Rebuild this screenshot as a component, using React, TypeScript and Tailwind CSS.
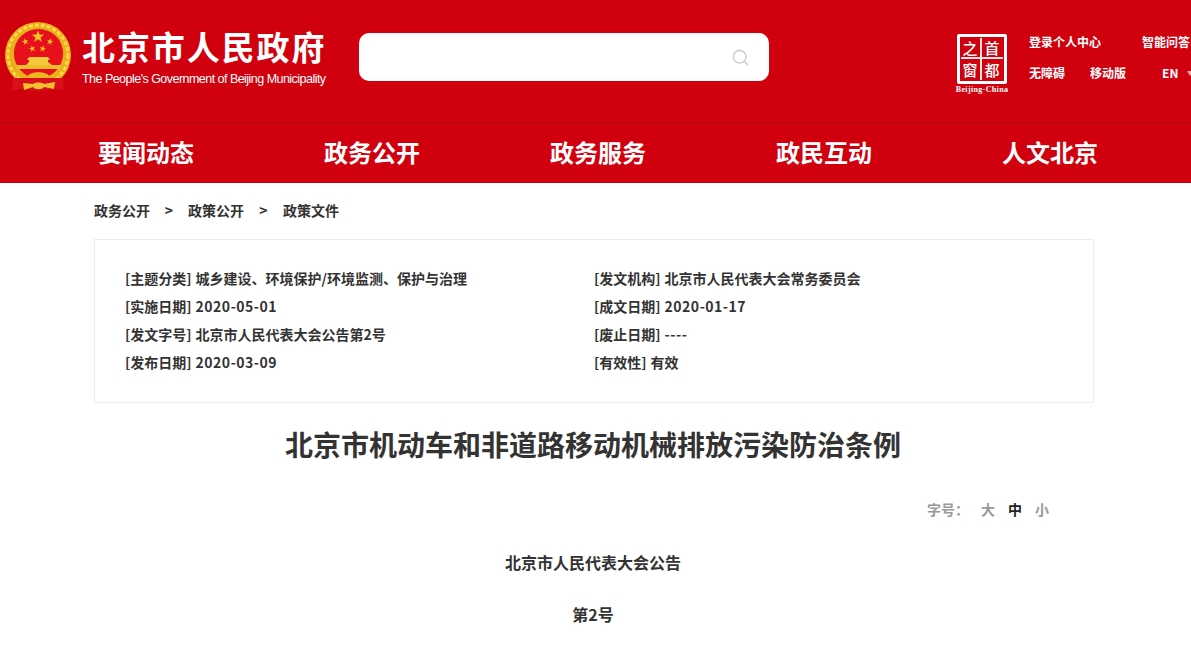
import { Search } from "lucide-react";

const navItems = ["要闻动态", "政务公开", "政务服务", "政民互动", "人文北京"];

const infoRows = [
    ["[主题分类]", "城乡建设、环境保护/环境监测、保护与治理", "[发文机构]", "北京市人民代表大会常务委员会"],
    ["[实施日期]", "2020-05-01", "[成文日期]", "2020-01-17"],
    ["[发文字号]", "北京市人民代表大会公告第2号", "[废止日期]", "----"],
    ["[发布日期]", "2020-03-09", "[有效性]", "有效"],
];

const fontStack = "font-['Noto_Sans_CJK_SC','Liberation_Sans',sans-serif]";

function Star({ cx, cy, r, rotate = 0 }: { cx: number; cy: number; r: number; rotate?: number }) {
    const points = [];
    for (let i = 0; i < 10; i++) {
        const radius = i % 2 === 0 ? r : r * 0.4;
        const angle = (Math.PI / 5) * i - Math.PI / 2 + (rotate * Math.PI) / 180;
        points.push(`${cx + radius * Math.cos(angle)},${cy + radius * Math.sin(angle)}`);
    }
    return <polygon points={points.join(" ")} fill="#f7c51e" />;
}

function Emblem() {
    return (
        <svg width="72" height="74" viewBox="0 0 72 74" className="shrink-0">
            <circle cx="36" cy="35" r="33" fill="#e9b01c" />
            <circle cx="36" cy="35" r="30" fill="none" stroke="#f9d84a" strokeWidth="3" strokeDasharray="4 2" />
            <circle cx="36.5" cy="33.5" r="24.6" fill="#e8101c" />
            <Star cx={36} cy={16.7} r={6.5} />
            <Star cx={23.3} cy={21.7} r={3.5} rotate={-15} />
            <Star cx={48} cy={21.7} r={3.5} rotate={15} />
            <Star cx={30.3} cy={28.7} r={3.5} rotate={-10} />
            <Star cx={40.7} cy={28.7} r={3.5} rotate={10} />
            <path d="M27 37 L46 37 L48 40 L46 40 L46 42 L50 45 L24 45 L27 42 L27 40 L25 40 Z" fill="#f4ca3a" />
            <rect x="14.5" y="45" width="44" height="4" fill="#f0bd2a" />
            <path d="M26 56 C28 51 45 51 47 56 L47 58 L26 58 Z" fill="#eeb820" />
            <path d="M11 58 L61 58 L62 70 L52 69 L36 71 L20 69 L10 71 Z" fill="#d8101c" />
            <path d="M21 63 L31 64 C33 62 40 62 42 64 L53 62 L52 69 L42 67 C40 70 33 70 31 67 L22 70 Z" fill="#f2c02c" />
        </svg>
    );
}

function CapitalLogo() {
    return (
        <div className="flex w-[54px] flex-col items-center">
            <div className="-ml-[1px] grid h-[50px] w-[50px] grid-cols-2 grid-rows-2 rounded-[2px] border-[3px] border-white p-[1px] text-[15px] leading-none font-medium text-white">
                <span className="flex items-center justify-center border-r-2 border-b-2 border-white/90">之</span>
                <span className="flex items-center justify-center border-b-2 border-white/90">首</span>
                <span className="flex items-center justify-center border-r-2 border-white/90">窗</span>
                <span className="flex items-center justify-center">都</span>
            </div>
            <span className="mt-[1px] text-[8px] leading-[10px] font-bold tracking-[0.35px] whitespace-nowrap text-white font-['Liberation_Serif',serif]">Beijing-China</span>
        </div>
    );
}

function InfoCell({ label, value }: { label: string; value: string }) {
    const isDate = /^[\d-]+$/.test(value);
    return (
        <div>
            {label}
            <span className={isDate ? "ml-[4px] tracking-[0.5px]" : "ml-[4px]"}>{value}</span>
        </div>
    );
}

export default function App() {
    return (
        <div className={`h-[646px] w-[1191px] overflow-hidden bg-white text-[#333] ${fontStack}`}>
            <div className="bg-[#d0000f]">
                <header className="flex h-[123px] items-start border-b border-[#a80010]">
                    <div className="mt-[20px] ml-[2px] shrink-0">
                        <Emblem />
                    </div>
                    <div className="mt-[23px] ml-[8px] w-[250px] shrink-0 text-white">
                        <div className="text-[33px] leading-[46px] font-bold tracking-[1.9px] whitespace-nowrap">北京市人民政府</div>
                        <div className="mt-[1px] text-[12.5px] leading-[18px] tracking-[-0.53px] whitespace-nowrap font-['Liberation_Sans',sans-serif]">The People's Government of Beijing Municipality</div>
                    </div>
                    <div className="mt-[33px] ml-[27px] flex h-[48px] w-[410px] shrink-0 items-center justify-end rounded-[10px] bg-white pr-[19px]">
                        <Search size={19} strokeWidth={2} className="text-[#cfcfcf]" />
                    </div>
                    <div className="mt-[34px] ml-[186px] shrink-0">
                        <CapitalLogo />
                    </div>
                    <div className="mt-[33px] ml-[20px] grid w-[200px] shrink-0 grid-cols-[113px_auto] gap-y-[13px] text-[12px] leading-[18px] font-bold whitespace-nowrap text-white">
                        <span>登录个人中心</span>
                        <span>智能问答</span>
                        <div className="flex gap-[25px]">
                            <span>无障碍</span>
                            <span>移动版</span>
                        </div>
                        <div className="ml-[20px] flex items-center gap-[9px]">
                            <span>EN</span>
                            <span className="h-0 w-0 border-x-[3px] border-t-[5px] border-x-transparent border-t-[#e9a8a8]" />
                        </div>
                    </div>
                </header>
                <nav className="flex h-[60px] items-start pl-[33px] text-[24px] leading-[58px] font-bold text-white">
                    {navItems.map((item) => (
                        <a key={item} className="w-[226px] shrink-0 text-center">{item}</a>
                    ))}
                </nav>
            </div>

            <div className="ml-[94px] w-[1000px]">
                <div className="flex h-[56px] items-center pb-[2px] text-[14px] font-bold">
                    <span>政务公开</span>
                    <span className="w-[38px] text-center">&gt;</span>
                    <span>政策公开</span>
                    <span className="w-[39px] text-center">&gt;</span>
                    <span>政策文件</span>
                </div>
                <div className="grid h-[164px] grid-cols-[469px_1fr] content-start border border-[#eeeee6] pt-[24px] pl-[30px] text-[14px] leading-[28px] font-bold">
                    {infoRows.map((row) => (
                        <div key={row[0]} className="contents">
                            <InfoCell label={row[0]} value={row[1]} />
                            <InfoCell label={row[2]} value={row[3]} />
                        </div>
                    ))}
                </div>
                <h1 className="mt-[21px] pr-[2px] text-center text-[28px] leading-[40px] font-bold">北京市机动车和非道路移动机械排放污染防治条例</h1>
                <div className="mt-[33px] flex h-[24px] items-center pl-[833px] text-[14px] font-bold whitespace-nowrap text-[#999]">
                    <span className="w-[54px]">字号：</span>
                    <span className="w-[27px]">大</span>
                    <span className="w-[27px] text-[#222]">中</span>
                    <span>小</span>
                </div>
                <p className="mt-[27px] pr-[2px] text-center text-[16px] leading-[28px] font-bold">北京市人民代表大会公告</p>
                <p className="mt-[24px] pr-[2px] text-center text-[16px] leading-[28px] font-bold">第2号</p>
            </div>
        </div>
    );
}
